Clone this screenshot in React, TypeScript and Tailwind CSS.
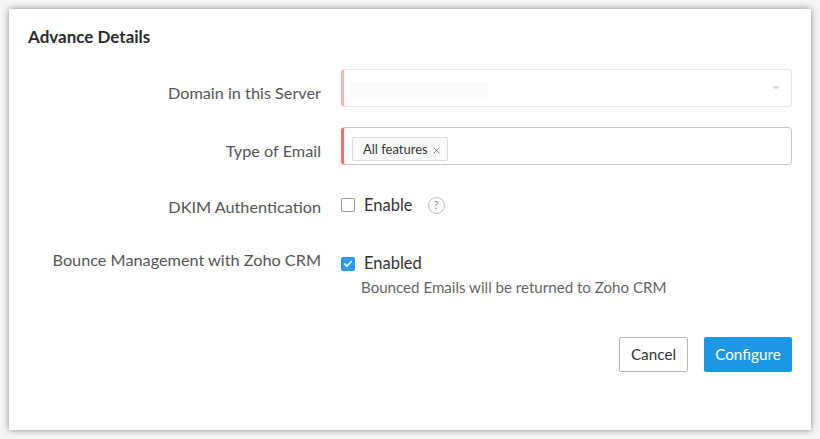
import { Check, X } from 'lucide-react';

const font = { fontFamily: 'Lato, sans-serif' };

function Label({ children }: { children: string }) {
  return <div className="w-[293px] shrink-0 text-right text-[16.25px] leading-[20px] text-[#555]">{children}</div>;
}

export default function App() {
  return (
    <div className="h-[439px] w-[820px] bg-[#f6f6f6] pl-[9px] pt-[9px]" style={font}>
      <div className="h-[421px] w-[802px] bg-white pl-[19px] pr-[19px] pt-[18px] shadow-[0_0_7px_rgba(0,0,0,0.45)]">
        <h1 className="text-[17px] font-bold leading-[20px] text-[#2b2b2b]">Advance Details</h1>

        <div className="mt-[22px] flex items-start gap-[20px]">
          <div className="pt-[14px]"><Label>Domain in this Server</Label></div>
          <div className="relative h-[38px] w-[451px] rounded-[4px] border border-[#e6e6e6] border-l-[3px] border-l-[#fdb4b4] pl-[5px] pt-[12px]">
            <div className="h-[17px] w-[139px] bg-[#fafafa]" />
            <div className="absolute right-[11px] top-[16px] h-0 w-0 border-x-[4px] border-t-[4px] border-x-transparent border-t-[#dddddd]" />
          </div>
        </div>

        <div className="mt-[20px] flex items-start gap-[20px]">
          <div className="pt-[14px]"><Label>Type of Email</Label></div>
          <div className="h-[38px] w-[451px] rounded-[4px] border border-[#c8c8c8] border-l-[3px] border-l-[#f26d6d] pl-[8px] pt-[9px]">
            <div className="flex h-[24px] w-[96px] items-center rounded-[2px] border border-[#dcdcdc] bg-[#f8f9fb] pl-[10px] pt-[1px] text-[13px] text-[#333]">
              All features
              <X size={11} strokeWidth={1.5} className="ml-[3px] mt-[1px] text-[#555]" />
            </div>
          </div>
        </div>

        <div className="mt-[29px] flex items-start gap-[20px]">
          <div className="pt-[3px]"><Label>DKIM Authentication</Label></div>
          <div className="flex h-[22px] items-center">
            <div className="h-[14px] w-[14px] rounded-[2px] border border-[#9a9a9a] bg-white" />
            <span className="ml-[9px] pt-[1px] text-[16.5px] text-[#333]">Enable</span>
            <span className="ml-[15px] flex h-[17px] w-[17px] items-center justify-center rounded-full border border-[#bbb] text-[11px] text-[#888]">?</span>
          </div>
        </div>

        <div className="mt-[33px] flex items-start gap-[20px]">
          <Label>Bounce Management with Zoho CRM</Label>
          <div>
            <div className="flex h-[22px] items-center pt-[5px]">
              <div className="flex h-[14px] w-[14px] items-center justify-center rounded-[2px] bg-[#2d9cf0]">
                <Check size={10} strokeWidth={4} className="text-white" />
              </div>
              <span className="ml-[9px] text-[16.5px] text-[#333]">Enabled</span>
            </div>
            <div className="ml-[20px] mt-[5px] text-[15.1px] leading-[20px] text-[#666]">Bounced Emails will be returned to Zoho CRM</div>
          </div>
        </div>

        <div className="mt-[40px] flex justify-end gap-[16px]">
          <button className="h-[35px] w-[69px] rounded-[2px] border border-[#b5b5b5] bg-white text-[15.3px] text-[#333]">Cancel</button>
          <button className="h-[35px] w-[88px] rounded-[2px] bg-[#1c97e3] text-[15.3px] text-white">Configure</button>
        </div>
      </div>
    </div>
  );
}
